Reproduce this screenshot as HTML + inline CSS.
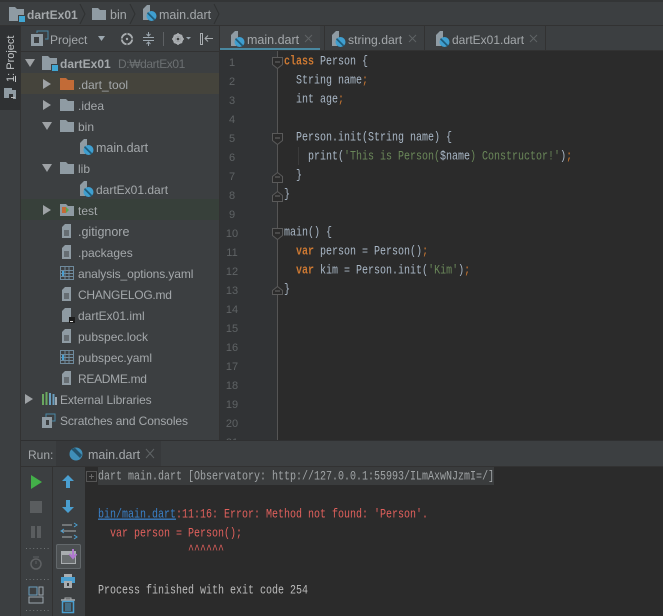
<!DOCTYPE html>
<html><head><meta charset="utf-8">
<style>
html,body{margin:0;padding:0;background:#3c3f41;}
#p{position:relative;width:663px;height:616px;overflow:hidden;background:#3c3f41;font-family:"Liberation Sans","Noto Sans CJK KR",sans-serif;font-size:12px;color:#a4a8ab;}
.b{position:absolute;}
.t{position:absolute;white-space:pre;line-height:16px;height:16px;}
.w{font-size:12.5px;}
.m{position:absolute;white-space:pre;font-family:"Liberation Mono",monospace;font-size:10px;line-height:14px;height:14px;color:#a9b7c6;transform:scaleY(1.28);transform-origin:50% 50%;margin-top:1px;}
.n{position:absolute;font-family:"Liberation Sans",sans-serif;font-size:11px;line-height:12px;color:#5f6365;left:220px;width:24px;text-align:center;margin-top:1px;}
.k{color:#cc7832;font-weight:bold;}.o{color:#cc7832;}.s{color:#6a8759;}
svg{position:absolute;left:0;top:0;}
</style></head><body><div id="p">
<div class="b" style="left:0;top:0;width:663px;height:2px;background:#333536"></div>
<div class="b" style="left:0;top:25px;width:663px;height:1px;background:#323232"></div>
<div class="b" style="left:0;top:26px;width:20px;height:84px;background:#2f3133"></div>
<div class="b" style="left:20px;top:26px;width:1px;height:590px;background:#323232"></div>
<div class="b" style="left:21px;top:51px;width:198px;height:1px;background:#323232"></div>
<div class="b" style="left:21px;top:73px;width:198px;height:21px;background:#45443c"></div>
<div class="b" style="left:21px;top:199px;width:198px;height:21px;background:#37403a"></div>
<div class="b" style="left:219px;top:26px;width:1px;height:414px;background:#323232"></div>
<div class="b" style="left:220px;top:26px;width:100px;height:25px;background:#404345"></div>
<div class="b" style="left:220px;top:48px;width:100px;height:3px;background:#4a88a0"></div>
<div class="b" style="left:324px;top:26px;width:1px;height:24px;background:#323232"></div>
<div class="b" style="left:424px;top:26px;width:1px;height:24px;background:#323232"></div>
<div class="b" style="left:545px;top:26px;width:1px;height:24px;background:#323232"></div>
<div class="b" style="left:220px;top:50px;width:443px;height:1px;background:#323232"></div>
<div class="b" style="left:220px;top:51px;width:443px;height:389px;background:#2b2b2b"></div>
<div class="b" style="left:220px;top:51px;width:57px;height:389px;background:#313335"></div>
<div class="b" style="left:277px;top:51px;width:1px;height:389px;background:#555"></div>
<div class="b" style="left:298px;top:147px;width:1px;height:18px;background:#3b3b3b"></div>
<div class="b" style="left:21px;top:440px;width:642px;height:1px;background:#2f3031"></div>
<div class="b" style="left:56px;top:441px;width:105px;height:25px;background:#37393b"></div>
<div class="b" style="left:21px;top:466px;width:642px;height:1px;background:#323232"></div>
<div class="b" style="left:52px;top:467px;width:1px;height:149px;background:#323232"></div>
<div class="b" style="left:85px;top:467px;width:578px;height:149px;background:#2b2b2b"></div>
<div class="b" style="left:98px;top:467px;width:396px;height:18px;background:#3a3c3d"></div>
<div class="b" style="left:56px;top:544px;width:25px;height:25px;background:#4c5052;border-radius:2px;box-shadow:inset 0 0 0 1px #63686b"></div>

<svg width="663" height="616" viewBox="0 0 663 616" fill="none">
<defs>
<g id="folder"><path d="M0 1h6l2 2h6v10H0z" fill="#8f9ba3"/></g>
<g id="modf"><path d="M0 0h6l2 2h7v12H0z" fill="#8f9ba3"/><rect x="9" y="8" width="7" height="7" fill="#3c3f41"/><rect x="10" y="9" width="6" height="6" fill="#40a6d2"/></g>
<g id="dart"><path d="M1 4l4-4h3v7l-2 8H1z" fill="#8f9ba3"/><circle cx="9.500" cy="11" r="5" fill="#3f9fd0"/><path d="M6 7l7.500 7.500-1.500 1-7-7z" fill="#1f5c7a"/></g>
<g id="file"><path d="M3 0h6v14H0V3z" fill="#8f9ba3"/><path d="M2 7h5M2 9h5M2 11h5" stroke="#3c3f41"/></g>
<g id="yaml"><rect x=".5" y=".5" width="13" height="13" stroke="#6f8a9c"/><path d="M.5 4.500h13M.5 7.500h13M.5 10.500h13M5 1v12M9 1v12" stroke="#6f8a9c"/><rect x="2" y="5" width="2" height="5" fill="#4a9fd0"/></g>
</defs>
<!-- breadcrumb -->
<use href="#modf" x="9" y="7"/><use href="#folder" x="92" y="7"/><use href="#dart" x="142" y="5"/>
<path d="M80 4l5 10-5 10M130 4l5 10-5 10M214 4l5 10-5 10" stroke="#2f3132"/>
<!-- side tab icon -->
<path d="M4 88h8l0 2h4v9h-3v-5H9v4H4z" fill="#8f9ba3"/><rect x="11" y="97" width="4" height="1" fill="#bbb"/>
<!-- project toolbar -->
<path d="M31 34h12v12H31z" fill="#8f9ba3"/><rect x="34" y="37" width="5" height="6" fill="#3c3f41"/><path d="M37 33v-2h11v8h-3" stroke="#4a88a8" />
<path d="M98 36h7l-3.500 5z" fill="#9ca7af"/>
<circle cx="127" cy="39" r="5.200" stroke="#a9adb0" stroke-width="1.800"/><path d="M127 33v3M127 42v3M121 39h3M130 39h3" stroke="#3c3f41" stroke-width="1"/><circle cx="127" cy="39" r="1.200" fill="#a9adb0"/>
<path d="M143 37.500h11M143 40.500h11" stroke="#9ca7af"/><path d="M148.500 32v4M146.500 34l2 2 2-2M148.500 46v-4M146.500 44l2-2 2 2" stroke="#9ca7af"/>
<rect x="163" y="32" width="1" height="14" fill="#5e6164"/>
<circle cx="178" cy="39" r="4" stroke="#a9adb0" stroke-width="2.600"/><path d="M178 33v12M172 39h12M174 35l8 8M182 35l-8 8" stroke="#a9adb0" stroke-width="1.500"/><circle cx="178" cy="39" r="1.300" fill="#3c3f41"/>
<path d="M186 37h5l-2.500 2.500z" fill="#9ca7af"/>
<rect x="200.500" y="33.500" width="2" height="11" stroke="#a9adb0"/><path d="M213 38.500h-8M208 35.500l-3 3 3 3" stroke="#a9adb0"/>
<!-- tree arrows -->
<g fill="#9ea2a5">
<path d="M25 59h10l-5 8z"/><path d="M43 79l8 5-8 5z"/><path d="M43 100l8 5-8 5z"/><path d="M42 122h10l-5 8z"/><path d="M42 164h10l-5 8z"/><path d="M43 205l8 5-8 5z"/><path d="M25 394l8 5-8 5z"/>
</g>
<!-- tree icons -->
<use href="#modf" x="42" y="56"/>
<path d="M60 78h6l2 2h6v10H60z" fill="#c26b37"/>
<use href="#folder" x="60" y="98"/><use href="#folder" x="60" y="119"/>
<use href="#dart" x="79" y="139"/>
<use href="#folder" x="60" y="161"/>
<use href="#dart" x="79" y="181"/>
<use href="#folder" x="60" y="203"/><rect x="62" y="207" width="4" height="6" fill="#c26b37"/><path d="M66 207l3 3-3 3z" fill="#5aa650"/>
<use href="#file" x="62" y="224"/><use href="#file" x="62" y="245"/><use href="#yaml" x="60" y="266"/><use href="#file" x="62" y="287"/>
<path d="M65 308h6v14H62v-11z" fill="#8f9ba3"/><rect x="69" y="317" width="6" height="6" fill="#1c1c1c"/><rect x="70" y="321" width="3" height="1" fill="#ddd"/>
<use href="#file" x="62" y="329"/><use href="#yaml" x="60" y="350"/><use href="#file" x="62" y="371"/>
<!-- ext libs -->
<path d="M43 394v11M46.500 392v13" stroke="#6aa860" stroke-width="2"/><path d="M50 393v12M53.500 394v11" stroke="#6a9fc0" stroke-width="2"/><path d="M56 397v8" stroke="#9ca7af" stroke-width="2"/>
<!-- scratches -->
<path d="M42 417h10v11H42z" fill="#8f9ba3"/><rect x="46" y="420" width="3" height="5" fill="#3c3f41"/><path d="M46 417v-3h9v7h-3" stroke="#4a88a8"/>
<!-- tabs dart icons -->
<use href="#dart" x="230" y="31"/><use href="#dart" x="331" y="31"/><use href="#dart" x="435" y="31"/>
<path d="M305 35l7 7M312 35l-7 7M409 35l7 7M416 35l-7 7M530 35l7 7M537 35l-7 7" stroke="#5f6365"/>
<!-- fold markers -->
<g stroke="#5a5a5a" fill="#2b2b2b">
<path d="M272.500 57.500h10v7l-5 4-5-4z"/><path d="M272.500 133.500h10v7l-5 4-5-4z"/><path d="M272.500 228.500h10v7l-5 4-5-4z"/>
<path d="M272.500 176.500l5-4 5 4v6h-10z"/><path d="M272.500 195.500l5-4 5 4v6h-10z"/><path d="M272.500 290.500l5-4 5 4v4h-10z"/>
</g>
<path d="M275 62h5M275 138h5M275 233h5M275 177h5M275 196h5M275 291h5" stroke="#6a6a6a"/>
<!-- run tab -->
<circle cx="76" cy="454" r="6.500" fill="#3f8fb8"/><path d="M71 449l9 9 2-3-7-7z" fill="#24536b"/>
<path d="M146 449l8 9M154 449l-8 9" stroke="#5f6365"/>
<!-- run toolbar 1 -->
<path d="M31 475l11 7-11 7z" fill="#43b049"/>
<rect x="30" y="501" width="12" height="12" fill="#5a5d5f"/>
<rect x="31" y="526" width="4" height="12" fill="#5a5d5f"/><rect x="37" y="526" width="4" height="12" fill="#5a5d5f"/>
<path d="M26 548.500h23M26 579.500h23M26 610.500h23" stroke="#707476" stroke-dasharray="1 2.600"/>
<circle cx="36" cy="564" r="5" stroke="#5e6163" stroke-width="1.500"/><path d="M33 557h6M36 561v3" stroke="#5e6163"/>
<rect x="29" y="587" width="8" height="8" stroke="#6a9fc0" fill="none"/><rect x="39" y="587" width="4" height="8" stroke="#9ca7af"/><rect x="29" y="597" width="14" height="6" stroke="#9ca7af"/>
<!-- run toolbar 2 -->
<path d="M68 475l6 6h-4v7h-4v-7h-4z" fill="#4a9fd0"/>
<path d="M68 513l6-6h-4v-7h-4v7h-4z" fill="#4a9fd0"/>
<path d="M62 525h10M62 531h14M62 537h10" stroke="#a9adb0"/><path d="M74 523l3 2-3 2M64 529l-3 2 3 2M74 535l3 2-3 2" stroke="#4a9fd0"/>
<rect x="61.500" y="551.500" width="14" height="12" fill="#6a6e70" stroke="#a9adb0"/><rect x="62" y="552" width="13" height="3" fill="#a9adb0"/>
<path d="M73 549v8M69.500 554l3.500 4 3.500-4" stroke="#b078d0" stroke-width="2"/>
<rect x="64" y="574" width="8" height="3" fill="#a9adb0"/><rect x="61" y="577" width="14" height="6" fill="#4a9fd0"/><rect x="64" y="581" width="8" height="7" fill="#a9adb0"/><rect x="67" y="583" width="2" height="3" fill="#3c3f41"/>
<path d="M61 600h14" stroke="#a9adb0" stroke-width="1.500"/><path d="M65 600v-2h6v2" stroke="#a9adb0"/><path d="M62.500 601.500h11v11h-11z" stroke="#4a9fd0" stroke-width="1.500"/><path d="M66 603v8M68 603v8M70 603v8" stroke="#4a9fd0"/>
<!-- console fold box -->
<rect x="86.500" y="471.500" width="10" height="10" stroke="#555"/><path d="M89 476.500h5M91.500 474v5" stroke="#666"/>
</svg>

<!-- breadcrumb text -->
<div class="t" style="left:27px;top:7px;font-weight:bold">dartEx01</div>
<div class="t w" style="left:110px;top:7px">bin</div>
<div class="t w" style="left:159px;top:7px">main.dart</div>
<!-- side label -->
<div class="t" style="left:3px;top:82px;font-size:11px;transform-origin:0 0;transform:rotate(-90deg);color:#c5c8ca;width:46px"><u>1</u>: Project</div>
<div class="t" style="left:50px;top:32px">Project</div>
<!-- tree -->
<div class="t" style="left:60px;top:56px;font-weight:bold">dartEx01</div>
<div class="t" style="left:118px;top:56px;color:#6c7072;letter-spacing:-.4px">D:₩dartEx01</div>
<div class="t" style="left:78px;top:77px">.dart_tool</div>
<div class="t" style="left:78px;top:98px">.idea</div>
<div class="t" style="left:78px;top:119px">bin</div>
<div class="t w" style="left:96px;top:140px">main.dart</div>
<div class="t" style="left:78px;top:161px">lib</div>
<div class="t" style="left:96px;top:182px">dartEx01.dart</div>
<div class="t" style="left:78px;top:203px">test</div>
<div class="t w" style="left:78px;top:224px">.gitignore</div>
<div class="t" style="left:78px;top:245px">.packages</div>
<div class="t" style="left:78px;top:266px;letter-spacing:-.1px">analysis_options.yaml</div>
<div class="t" style="left:78px;top:287px;letter-spacing:-.25px">CHANGELOG.md</div>
<div class="t" style="left:78px;top:308px">dartEx01.iml</div>
<div class="t" style="left:78px;top:329px">pubspec.lock</div>
<div class="t" style="left:78px;top:350px">pubspec.yaml</div>
<div class="t" style="left:78px;top:371px;letter-spacing:-.3px">README.md</div>
<div class="t" style="left:60px;top:392px;letter-spacing:-.1px">External Libraries</div>
<div class="t" style="left:60px;top:413px;letter-spacing:-.1px">Scratches and Consoles</div>
<!-- tabs -->
<div class="t w" style="left:247px;top:32px">main.dart</div>
<div class="t" style="left:348px;top:32px;font-size:12.2px">string.dart</div>
<div class="t" style="left:452px;top:32px">dartEx01.dart</div>
<!-- line numbers -->
<div class="n" style="top:56px">1</div><div class="n" style="top:75px">2</div><div class="n" style="top:94px">3</div><div class="n" style="top:113px">4</div><div class="n" style="top:132px">5</div><div class="n" style="top:151px">6</div><div class="n" style="top:170px">7</div><div class="n" style="top:189px">8</div><div class="n" style="top:208px">9</div><div class="n" style="top:227px">10</div><div class="n" style="top:246px">11</div><div class="n" style="top:265px">12</div><div class="n" style="top:284px">13</div><div class="n" style="top:303px">14</div><div class="n" style="top:322px">15</div><div class="n" style="top:341px">16</div><div class="n" style="top:360px">17</div><div class="n" style="top:379px">18</div><div class="n" style="top:398px">19</div><div class="n" style="top:417px">20</div><div class="n" style="top:436px;height:3px;overflow:hidden">21</div>
<!-- code -->
<div class="m" style="left:284px;top:55px"><span class="k">class</span> Person {</div>
<div class="m" style="left:284px;top:74px">  String name<span class="o">;</span></div>
<div class="m" style="left:284px;top:93px">  int age<span class="o">;</span></div>
<div class="m" style="left:284px;top:131px">  Person.init(String name) {</div>
<div class="m" style="left:284px;top:150px">    print(<span class="s">'This is Person(</span>$name<span class="s">) Constructor!'</span>)<span class="o">;</span></div>
<div class="m" style="left:284px;top:169px">  }</div>
<div class="m" style="left:284px;top:188px">}</div>
<div class="m" style="left:284px;top:226px">main() {</div>
<div class="m" style="left:284px;top:245px">  <span class="k">var</span> person = Person()<span class="o">;</span></div>
<div class="m" style="left:284px;top:264px">  <span class="k">var</span> kim = Person.init(<span class="s">'Kim'</span>)<span class="o">;</span></div>
<div class="m" style="left:284px;top:283px">}</div>
<!-- run -->
<div class="t" style="left:28px;top:447px">Run:</div>
<div class="t w" style="left:88px;top:447px">main.dart</div>
<!-- console -->
<div class="m" style="left:98px;top:470px;color:#a0a4a6">dart main.dart [Observatory: http://127.0.0.1:55993/ILmAxwNJzmI=/]</div>
<div class="m" style="left:98px;top:508px;color:#e0605c"><span style="color:#3a80c8;text-decoration:underline">bin/main.dart</span>:11:16: Error: Method not found: 'Person'.</div>
<div class="m" style="left:98px;top:527px;color:#e0605c">  var person = Person();</div>
<div class="m" style="left:98px;top:544px;color:#e0605c">               ^^^^^^</div>
<div class="m" style="left:98px;top:584px;color:#bbbbbb">Process finished with exit code 254</div>
</div></body></html>
